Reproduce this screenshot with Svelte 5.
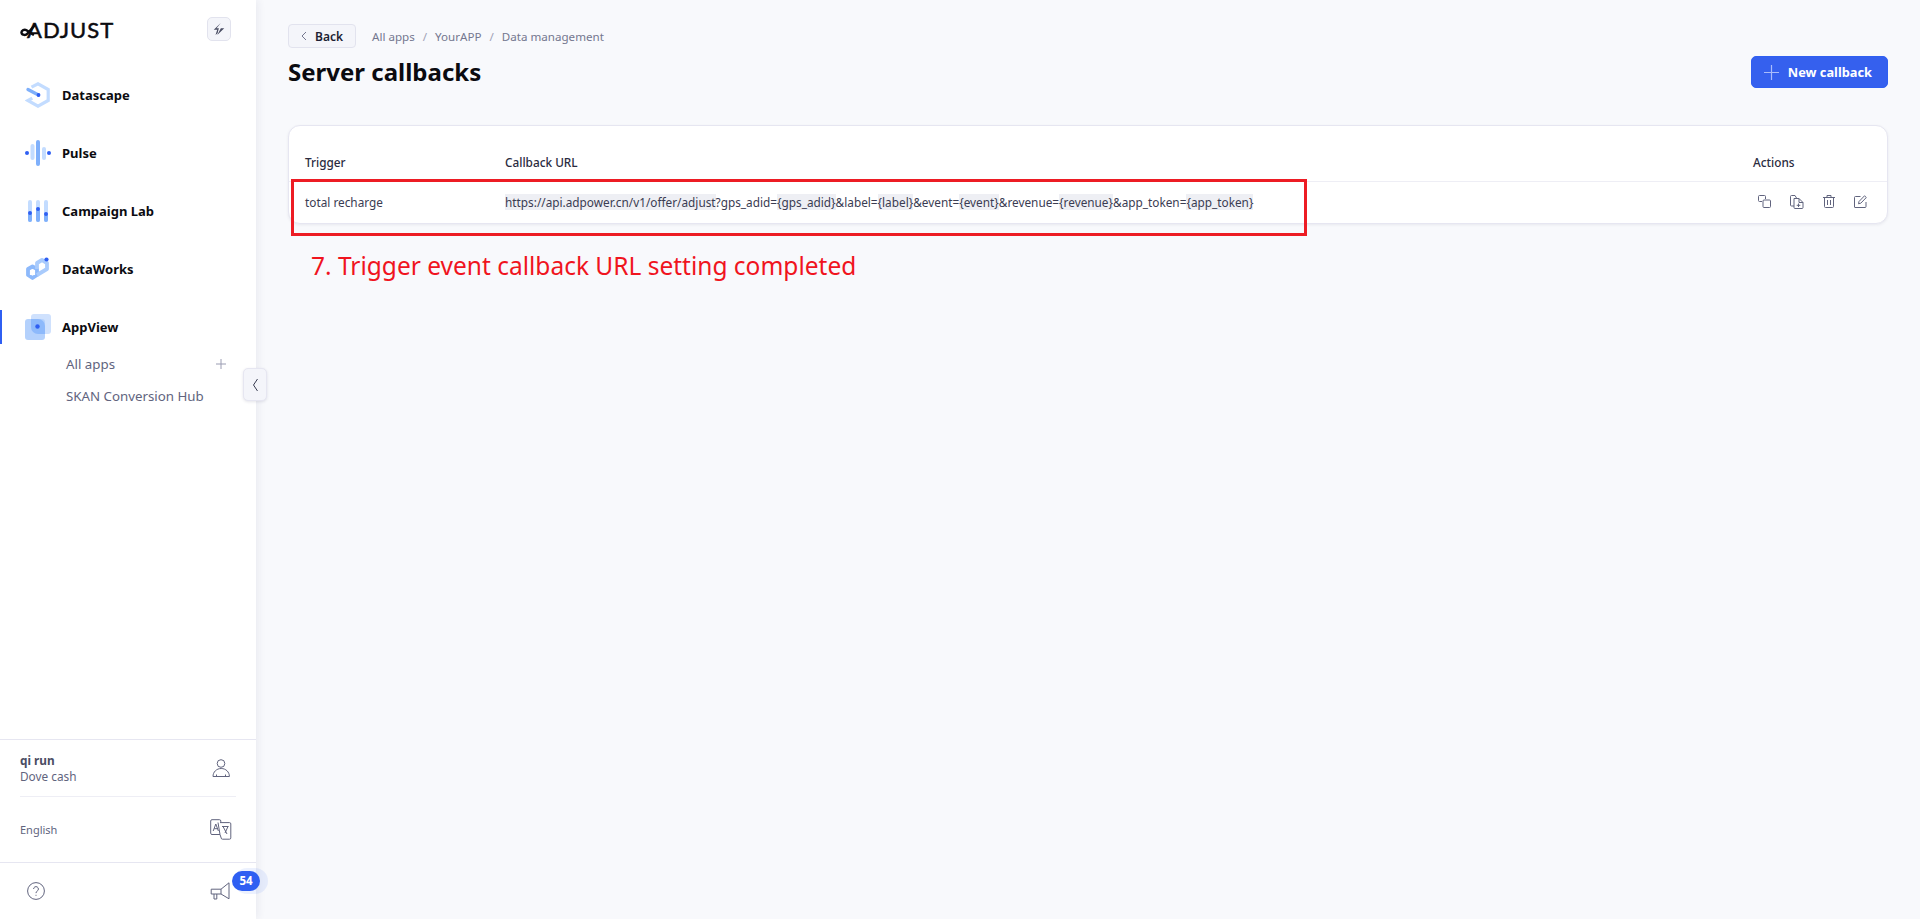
<script>
	const products = [
		{ name: 'Datascape', icon: 'datascape' },
		{ name: 'Pulse', icon: 'pulse' },
		{ name: 'Campaign Lab', icon: 'lab' },
		{ name: 'DataWorks', icon: 'works' },
		{ name: 'AppView', icon: 'appview', active: true }
	];

	const urlParts = [
		{ text: 'https://api.adpower.cn/v1/offer/adjust', mark: true },
		{ text: '?gps_adid=' },
		{ text: '{gps_adid}', mark: true },
		{ text: '&label=' },
		{ text: '{label}', mark: true },
		{ text: '&event=' },
		{ text: '{event}', mark: true },
		{ text: '&revenue=' },
		{ text: '{revenue}', mark: true },
		{ text: '&app_token=' },
		{ text: '{app_token}', mark: true }
	];
</script>

<div class="shell">
	<aside class="sidebar">
		<div class="brand">
			<div class="logo">
				<svg class="logo-loop" width="16" height="16" viewBox="0 0 16 16" fill="none">
					<path d="M15 3 7.500 11.500C6 13.500 2 13.500 1.500 10.800 1.200 8.200 4.500 7 6.500 8.200L13 12.500" stroke="#0b0b10" stroke-width="2.400" stroke-linecap="round" />
				</svg>
				<span>ADJUST</span>
			</div>
			<button class="bolt" type="button" aria-label="Quick actions">
				<svg width="14" height="14" viewBox="0 0 12 12" fill="#4a4d63">
					<path d="M7.500.8 1.500 6.600h3L3 11.200 5 9.400 4.900 9l1-3.600H3.900L7.500.8ZM10.500 5.400H7.600L4.500 11.200l6-5.800Z" />
				</svg>
			</button>
		</div>

		<nav class="nav">
			{#each products as item}
				<div class="nav-item" class:active={item.active}>
					<svg width="26" height="26" viewBox="0 0 26 26" fill="none">
						{#if item.icon === 'datascape'}
							<path d="M6.500 5.200 13 1.800l10.200 5.700v11L13 24.200 2.800 18.500l4.500-2.400" stroke="#c3dcff" stroke-width="3.200" />
							<path d="M3 7.500 13.500 13" stroke="#7fb0fb" stroke-width="3.400" stroke-linecap="round" />
							<circle cx="13.500" cy="13" r="1.900" fill="#2f5ff2" />
						{:else if item.icon === 'pulse'}
							<rect x="11" y="0" width="4" height="26" rx="2" fill="#7fb0fb" />
							<rect x="5.500" y="4" width="4" height="16" rx="2" fill="#c3dcff" />
							<rect x="17" y="7" width="4" height="13" rx="2" fill="#c3dcff" />
							<circle cx="2" cy="13" r="2" fill="#2f5ff2" />
							<circle cx="24" cy="13" r="2" fill="#2f5ff2" />
						{:else if item.icon === 'lab'}
							<rect x="3" y="2" width="4" height="22" rx="2" fill="#c3dcff" />
							<rect x="11" y="2" width="4" height="22" rx="2" fill="#c3dcff" />
							<rect x="19" y="2" width="4" height="22" rx="2" fill="#c3dcff" />
							<rect x="3" y="15" width="4" height="9" rx="2" fill="#7fb0fb" />
							<rect x="11" y="11" width="4" height="13" rx="2" fill="#7fb0fb" />
							<rect x="19" y="16" width="4" height="8" rx="2" fill="#7fb0fb" />
							<circle cx="5" cy="15" r="2" fill="#2f5ff2" />
							<circle cx="13" cy="11" r="2" fill="#2f5ff2" />
							<circle cx="21" cy="16" r="2" fill="#2f5ff2" />
						{:else if item.icon === 'works'}
							<path d="M7.500 10.500 3 13v6l4.500 3 4.500-3v-6Z" stroke="#8db9fb" stroke-width="3.800" stroke-linejoin="round" />
							<path d="M12 13v-6l5-3 5 3v6l-5 3-5 3" stroke="#a9cbfc" stroke-width="3.800" stroke-linejoin="round" />
							<circle cx="21.500" cy="3.500" r="2.100" fill="#2f5ff2" />
						{:else}
							<rect x="6" y="0" width="20" height="20" rx="3" fill="#cfe1fd" />
							<rect x="0" y="5" width="20" height="21" rx="3" fill="#b4d1fc" />
							<path d="M6 5h7a7 7 0 0 1 7 7v8h-7a7 7 0 0 1-7-7Z" fill="#8db9fb" />
							<circle cx="12.500" cy="12.500" r="2.200" fill="#2f5ff2" />
						{/if}
					</svg>
					<span>{item.name}</span>
				</div>
			{/each}
			<div class="sub-item">
				<span>All apps</span>
				<svg width="10" height="10" viewBox="0 0 10 10" stroke="#9a9cb2">
					<path d="M5 0v10M0 5h10" />
				</svg>
			</div>
			<div class="sub-item"><span>SKAN Conversion Hub</span></div>
		</nav>

		<div class="footer">
			<div class="user">
				<div class="user-row">
					<div class="who">
						<strong>qi run</strong>
						<span>Dove cash</span>
					</div>
					<svg width="18" height="20" viewBox="0 0 18 20" fill="none" stroke="#61647e" stroke-width="1">
						<circle cx="9" cy="5.500" r="3.800" />
						<path d="M1 18.500h16.400c0-4.500-3.500-8-8.200-8s-8.200 3.500-8.200 8ZM4.500 18.500v-2M13.500 18.500v-2" />
					</svg>
				</div>
				<div class="user-row lang">
					<span>English</span>
					<svg width="22" height="22" viewBox="0 0 22 22" fill="none" stroke="#61647e" stroke-width="1">
						<path d="M10 15.500H2a1.300 1.300 0 0 1-1.300-1.300V2A1.300 1.300 0 0 1 2 .7h7.500a1.300 1.300 0 0 1 1.300 1.300v1.600" />
						<path d="M10 3.600h9.500a1.300 1.300 0 0 1 1.300 1.300v14a1.300 1.300 0 0 1-1.300 1.300h-7A1.300 1.300 0 0 1 11.200 19l-1.200-3.500-2-12" />
						<path d="m3.200 12 2.600-7 2.600 7M4.200 9.700h3.300M12 7.500h6.500M13 7.500l4 7.500M18 7.500 15 14" />
					</svg>
				</div>
			</div>
			<div class="tools">
				<svg width="18" height="18" viewBox="0 0 18 18" fill="none" stroke="#61647e" stroke-width="1">
					<circle cx="9" cy="9" r="8.400" />
					<path d="M6.600 7a2.400 2.400 0 1 1 3.600 2.100c-.8.500-1.200 1-1.200 2" />
					<path d="M9 12.800v1" />
				</svg>
				<svg width="20" height="18" viewBox="0 0 20 18" fill="none" stroke="#61647e" stroke-width="1">
					<path d="M19 .8v16L11 12H1.200V7.200H11Z" />
					<path d="M11 7.200V12M4 12v5h2.800v-5" />
				</svg>
			</div>
		</div>
	</aside>

	<button class="collapse" type="button" aria-label="Collapse sidebar">
		<svg width="7" height="14" viewBox="0 0 7 14" fill="none" stroke="#3a3c52" stroke-width="1">
			<path d="M5.500 1 1.500 7l4 6" />
		</svg>
	</button>
	<span class="badge">54</span>

	<main class="main">
		<div class="crumbs">
			<button class="back" type="button">
				<svg width="6" height="10" viewBox="0 0 6 10" fill="none" stroke="#74778f" stroke-width="1">
					<path d="M5 1 1 5l4 4" />
				</svg>
				Back
			</button>
			<span>All apps</span>
			<span class="sep">/</span>
			<span>YourAPP</span>
			<span class="sep">/</span>
			<span>Data management</span>
		</div>

		<header class="title-row">
			<h1>Server callbacks</h1>
			<button class="new" type="button">
				<svg width="15" height="15" viewBox="0 0 15 15" stroke="#a9bcfb" stroke-width="1.200">
					<path d="M7.500 0v15M0 7.500h15" />
				</svg>
				New callback
			</button>
		</header>

		<section class="card">
			<div class="row head">
				<span>Trigger</span>
				<span>Callback URL</span>
				<span>Actions</span>
			</div>
			<div class="row body">
				<span>total recharge</span>
				<span class="url">
					{#each urlParts as part}{#if part.mark}<mark>{part.text}</mark>{:else}{part.text}{/if}{/each}
				</span>
				<span class="actions">
					<svg width="13" height="13" viewBox="0 0 13 13" fill="none" stroke="#61647e">
						<path d="M7.500 4V1.500a1 1 0 0 0-1-1h-5a1 1 0 0 0-1 1v4a1 1 0 0 0 1 1H4" />
						<rect x="5" y="5" width="7.500" height="7.500" rx="1" />
					</svg>
					<svg width="14" height="14" viewBox="0 0 14 14" fill="none" stroke="#61647e">
						<path d="M4 11H1.500a1 1 0 0 1-1-1V1.500a1 1 0 0 1 1-1H5l1.500 2.500" />
						<path d="M4 3.500h5l4 4v5a1 1 0 0 1-1 1H5a1 1 0 0 1-1-1ZM9 3.500v4h4M8.500 8.500v3.500M6.700 10.300h3.600" />
					</svg>
					<svg width="12" height="13" viewBox="0 0 12 13" fill="none" stroke="#61647e">
						<path d="M0 2.500h12M4 2.500V.5h4v2M1.500 2.500v9a1 1 0 0 0 1 1h7a1 1 0 0 0 1-1v-9M4.500 5v5M7.500 5v5" />
					</svg>
					<svg width="13" height="13" viewBox="0 0 13 13" fill="none" stroke="#61647e">
						<path d="M6.500 1.500h-5a1 1 0 0 0-1 1v9.500a.5.5 0 0 0 .5.5h10a1 1 0 0 0 1-1V7" />
						<path d="M4.500 8.800 5 6.500 10.500.8l1.800 1.700L6.800 8.200Z" />
					</svg>
				</span>
			</div>
			<!-- annotation drawn on top of the screenshot -->
			<div class="red-box"></div>
		</section>
		<p class="note">7. Trigger event callback URL setting completed</p>
	</main>
</div>

<style>
	:global(body) {
		background: #f8f9fc;
		font-family: 'Noto Sans', sans-serif;
	}

	button {
		font-family: inherit;
		cursor: pointer;
	}

	.shell {
		position: relative;
		display: flex;
		height: 919px;
		overflow: hidden;
	}

	.sidebar {
		width: 256px;
		flex: none;
		display: flex;
		flex-direction: column;
		background: #fff;
		box-shadow: 2px 0 8px rgba(40, 44, 80, 0.07);
	}

	.brand {
		display: flex;
		align-items: center;
		justify-content: space-between;
		height: 58px;
		padding: 0 25px 0 20px;
	}

	.logo {
		display: flex;
		align-items: center;
		font-family: Lato, sans-serif;
		font-size: 22px;
		letter-spacing: 1px;
		color: #0b0b10;
		-webkit-text-stroke: 0.5px #0b0b10;
	}

	.logo-loop {
		margin-right: -9px;
		margin-top: 1px;
	}

	.bolt {
		display: grid;
		place-items: center;
		width: 24px;
		height: 24px;
		padding: 0;
		background: #f4f5fa;
		border: 1px solid #e2e3ee;
		border-radius: 5px;
	}

	.nav {
		padding-top: 20px;
		flex: 1;
	}

	.nav-item {
		display: flex;
		align-items: center;
		gap: 11px;
		height: 34px;
		margin-bottom: 24px;
		padding-left: 25px;
		font-size: 13px;
		font-weight: 700;
		color: #0b0b10;
	}

	.nav-item svg {
		flex: none;
	}

	.nav-item.active {
		margin-bottom: 4px;
		box-shadow: inset 2px 0 0 #2f5ff2;
	}

	.sub-item {
		display: flex;
		justify-content: space-between;
		align-items: center;
		height: 32px;
		padding: 0 30px 0 66px;
		font-size: 13.300px;
		color: #61647e;
	}

	.footer {
		border-top: 1px solid #e6e6f1;
	}

	.user {
		padding: 0 20px;
	}

	.user-row {
		display: flex;
		justify-content: space-between;
		align-items: center;
		height: 56px;
		padding-right: 6px;
		border-bottom: 1px solid #eeeef5;
	}

	.user-row.lang {
		height: 65px;
		padding-right: 4px;
		border-bottom: 0;
		font-size: 11px;
		color: #61647e;
	}

	.who {
		display: flex;
		flex-direction: column;
		font-size: 11.800px;
		line-height: 16px;
		color: #61647e;
	}

	.who strong {
		color: #4a4d63;
	}

	.tools {
		display: flex;
		justify-content: space-between;
		align-items: center;
		height: 56px;
		padding: 0 26px 0 27px;
		border-top: 1px solid #e6e6f1;
	}

	.collapse {
		position: absolute;
		left: 243px;
		top: 368px;
		display: grid;
		place-items: center;
		width: 24px;
		height: 33px;
		padding: 0;
		background: #f4f5fa;
		border: 1px solid #e6e6f1;
		border-radius: 5px;
		box-shadow: 0 1px 3px rgba(40, 44, 80, 0.12);
	}

	.badge {
		position: absolute;
		left: 232px;
		top: 871px;
		width: 28px;
		height: 20px;
		text-align: center;
		font-size: 11.500px;
		font-weight: 700;
		line-height: 20px;
		color: #fff;
		background: #2f5ff2;
		border-radius: 10px;
		box-shadow: 5px 0 0 3px rgba(47, 95, 242, 0.09);
	}

	.main {
		flex: 1;
		min-width: 0;
		padding: 24px 32px 0;
	}

	.crumbs {
		display: flex;
		align-items: center;
		gap: 8px;
		height: 24px;
		font-size: 11.600px;
		color: #74778f;
	}

	.sep {
		color: #a0a2b6;
	}

	.back {
		display: flex;
		align-items: center;
		gap: 8px;
		height: 24px;
		margin-right: 8px;
		padding: 0 12px;
		font-size: 12px;
		font-weight: 600;
		color: #1d1e33;
		background: #f4f5fa;
		border: 1px solid #e2e3ee;
		border-radius: 4px;
	}

	.title-row {
		display: flex;
		justify-content: space-between;
		align-items: center;
		height: 32px;
		margin-top: 8px;
	}

	h1 {
		margin: -2px 0 0;
		font-size: 24px;
		font-weight: 700;
		color: #0b0b10;
	}

	.new {
		display: flex;
		align-items: center;
		gap: 9px;
		height: 32px;
		padding: 0 15px 0 12px;
		font-size: 12.800px;
		font-weight: 700;
		color: #fff;
		background: #3560ee;
		border: 1px solid #2f5ff2;
		border-radius: 5px;
	}

	.card {
		position: relative;
		margin-top: 37px;
		background: #fff;
		border: 1px solid #e6e6f1;
		border-radius: 12px;
		box-shadow: 0 1px 3px rgba(40, 44, 80, 0.08);
	}

	.row {
		display: grid;
		grid-template-columns: 200px 1fr 118px;
		padding: 0 16px;
		font-size: 11.800px;
		align-items: center;
	}

	.head {
		height: 56px;
		padding-top: 16px;
		box-sizing: border-box;
		font-weight: 500;
		color: #2a2b40;
		border-bottom: 1px solid #eeeef5;
	}

	.body {
		height: 41px;
		padding-bottom: 2px;
		box-sizing: border-box;
		color: #3a3c52;
	}

	.url {
		color: #3a3c52;
		white-space: nowrap;
	}

	mark {
		color: inherit;
		background: #eeeff4;
	}

	.actions {
		display: flex;
		align-items: center;
		gap: 19px;
		padding-left: 5px;
	}

	.red-box {
		position: absolute;
		left: 2px;
		top: 53px;
		width: 1016px;
		height: 57px;
		box-sizing: border-box;
		border: 3px solid #ed1c24;
		pointer-events: none;
	}

	.note {
		margin: 26px 0 0 23px;
		font-size: 24.500px;
		line-height: 32px;
		color: #f0141e;
	}
</style>
